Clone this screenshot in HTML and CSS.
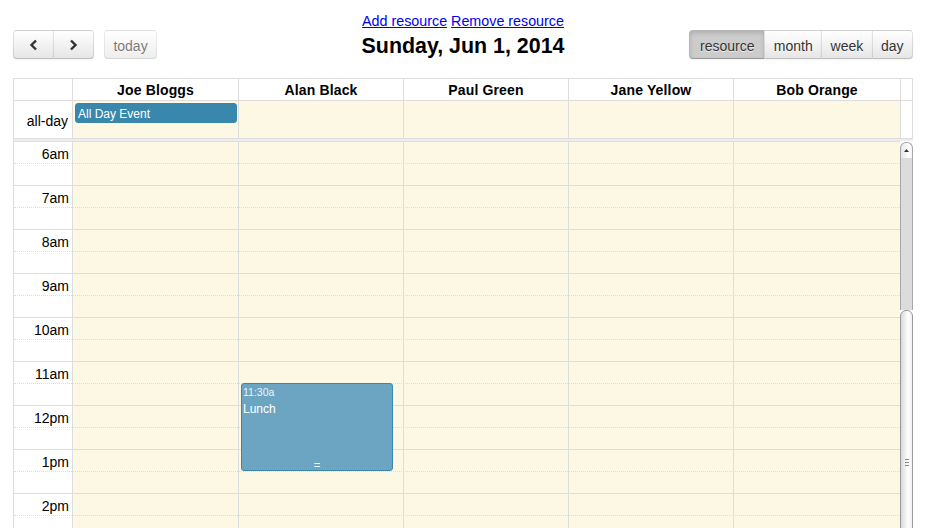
FILE: index.html
```html
<!DOCTYPE html>
<html>
<head>
<meta charset="utf-8">
<title>Resource calendar</title>
<link rel="stylesheet" href="styles.css">
</head>
<body>
<div class="page">
  <div class="links"><a href="#">Add resource</a> <a href="#">Remove resource</a></div>
  <div class="toolbar">
    <div class="tb-left">
      <div class="btn-group">
        <button class="btn btn-icon" type="button"><svg width="9" height="12" viewBox="0 0 9 12"><polyline points="7,1.5 2.5,6 7,10.5" fill="none" stroke="#333" stroke-width="2.4"/></svg></button>
        <button class="btn btn-icon" type="button"><svg width="9" height="12" viewBox="0 0 9 12"><polyline points="2,1.5 6.5,6 2,10.5" fill="none" stroke="#333" stroke-width="2.4"/></svg></button>
      </div>
      <button class="btn disabled" type="button">today</button>
    </div>
    <h2 class="title">Sunday, Jun 1, 2014</h2>
    <div class="tb-right">
      <div class="btn-group">
        <button class="btn active" type="button">resource</button>
        <button class="btn" type="button">month</button>
        <button class="btn" type="button">week</button>
        <button class="btn" type="button">day</button>
      </div>
    </div>
  </div>

  <div class="cal">
    <div class="row-head">
      <div class="cell"></div>
      <div class="cell">Joe Bloggs</div>
      <div class="cell">Alan Black</div>
      <div class="cell">Paul Green</div>
      <div class="cell">Jane Yellow</div>
      <div class="cell">Bob Orange</div>
      <div class="cell"></div>
    </div>
    <div class="row-allday">
      <div class="cell axis-label">all-day</div>
      <div class="cell day"><div class="ad-event">All Day Event</div></div>
      <div class="cell day"></div>
      <div class="cell day"></div>
      <div class="cell day"></div>
      <div class="cell day"></div>
      <div class="cell"></div>
    </div>
    <div class="divider"></div>
    <div class="body">
      <div class="tg">
        <div class="tg-bg">
          <div class="bg-axis"></div>
          <div class="bg-day"></div>
          <div class="bg-day"></div>
          <div class="bg-day"></div>
          <div class="bg-day"></div>
          <div class="bg-day last"></div>
        </div>
        <div class="slats">
          <div class="slat"><div class="slat-label">6am</div></div>
          <div class="slat minor"></div>
          <div class="slat"><div class="slat-label">7am</div></div>
          <div class="slat minor"></div>
          <div class="slat"><div class="slat-label">8am</div></div>
          <div class="slat minor"></div>
          <div class="slat"><div class="slat-label">9am</div></div>
          <div class="slat minor"></div>
          <div class="slat"><div class="slat-label">10am</div></div>
          <div class="slat minor"></div>
          <div class="slat"><div class="slat-label">11am</div></div>
          <div class="slat minor"></div>
          <div class="slat"><div class="slat-label">12pm</div></div>
          <div class="slat minor"></div>
          <div class="slat"><div class="slat-label">1pm</div></div>
          <div class="slat minor"></div>
          <div class="slat"><div class="slat-label">2pm</div></div>
          <div class="slat minor"></div>
          <div class="slat"></div>
        </div>
        <div class="tg-ev">
          <div></div>
          <div class="ev-col"></div>
          <div class="ev-col">
            <div class="tg-event" style="top:242px;height:88px">
              <div class="ev-time">11:30a</div>
              <div class="ev-title">Lunch</div>
              <div class="ev-resizer">=</div>
            </div>
          </div>
          <div class="ev-col"></div>
          <div class="ev-col"></div>
          <div class="ev-col"></div>
        </div>
      </div>
      <div class="sb">
        <div class="sb-btn"><svg width="5" height="3" viewBox="0 0 5 3"><polygon points="0,3 2.5,0 5,3" fill="#333"/></svg></div>
        <div class="sb-track"></div>
        <div class="sb-thumb"><div class="grip"><i></i><i></i><i></i></div></div>
      </div>
    </div>
  </div>
</div>
</body>
</html>
```
FILE: styles.css
```css
* { box-sizing: border-box; }
html, body { margin: 0; padding: 0; background: #fff; }
body {
  font-family: "Liberation Sans", Arial, Helvetica, sans-serif;
  font-size: 14px;
  color: #000;
  overflow: hidden;
}
.page { width: 900px; margin-left: 13px; padding-top: 13px; }

.links { text-align: center; line-height: 16px; height: 16px; font-size: 14.3px; }
.links a { color: #0000ee; text-decoration: underline; }

.toolbar {
  display: grid;
  grid-template-columns: 1fr auto 1fr;
  align-items: start;
  margin-top: 1px;
  height: 29px;
  margin-bottom: 19px;
}
.tb-left { display: flex; gap: 10px; }
.tb-right { display: flex; justify-content: flex-end; }
.title {
  margin: 4px 0 0;
  font-size: 21.4px;
  line-height: 24px;
  font-weight: bold;
}

.btn {
  font-family: inherit;
  font-size: 14px;
  height: 29px;
  margin: 0;
  padding: 2px 8.4px 0;
  border: 1px solid;
  border-color: rgba(0,0,0,.1) rgba(0,0,0,.1) rgba(0,0,0,.25);
  background: #f5f5f5 linear-gradient(to bottom, #fff, #e6e6e6);
  color: #333;
  text-shadow: 0 1px 1px rgba(255,255,255,.75);
  box-shadow: inset 0 1px 0 rgba(255,255,255,.2), 0 1px 2px rgba(0,0,0,.05);
  border-radius: 4px;
  cursor: pointer;
}
.btn-icon { width: 41px; display: flex; align-items: center; justify-content: center; padding: 1px 0 0; }
.btn-group { display: flex; }
.btn-group .btn { border-radius: 0; }
.btn-group .btn + .btn { margin-left: -1px; }
.btn-group .btn:first-child { border-radius: 4px 0 0 4px; }
.btn-group .btn:last-child { border-radius: 0 4px 4px 0; }
.btn.active {
  background: #ccc;
  padding-left: 10px;
  padding-right: 10px;
  box-shadow: inset 0 2px 4px rgba(0,0,0,.15), 0 1px 2px rgba(0,0,0,.05);
}
.btn.disabled { opacity: .65; box-shadow: none; cursor: default; }

.cal { border-top: 1px solid #ddd; border-left: 1px solid #ddd; }
.row-head, .row-allday {
  display: grid;
  grid-template-columns: 59px 166px 165px 165px 165px 167px 12px;
}
.row-head .cell {
  height: 22px;
  border-right: 1px solid #ddd;
  border-bottom: 1px solid #ddd;
  padding-top: 3px;
  line-height: 16px;
  text-align: center;
  font-weight: bold;
  letter-spacing: 0.15px;
}
.row-allday .cell {
  height: 38px;
  border-right: 1px solid #ddd;
  border-bottom: 1px solid #ddd;
}
.row-allday .day { background: #fcf8e3; }
.axis-label { text-align: right; padding: 12px 4px 0 0; line-height: 16px; }
.divider { height: 2px; background: #eee; }

.ad-event {
  margin: 2px 1px 0 2px;
  height: 20px;
  background: #3a87ad;
  border: 1px solid #3a87ad;
  border-radius: 3px;
  color: #fff;
  font-size: 12px;
  line-height: 18px;
  padding: 1px 2px 0;
  white-space: nowrap;
  overflow: hidden;
}

.body { display: flex; height: 387px; }
.tg {
  width: 886px;
  display: grid;
  grid-template-columns: 886px;
  grid-template-rows: 387px;
  overflow: hidden;
}
.tg > * { grid-area: 1 / 1; }
.tg-bg, .tg-ev {
  display: grid;
  grid-template-columns: 59px 166px 165px 165px 165px 166px;
}
.bg-axis { background: #fff; border-right: 1px solid #ddd; }
.bg-day { background: #fcf8e3; border-right: 1px solid #ddd; }
.bg-day.last { border-right: none; }
.ev-col { position: relative; }

.slat { height: 22px; border-top: 1px solid #ddd; }
.slat.minor { border-top-style: dotted; }
.slat-label { width: 59px; text-align: right; padding: 4px 4px 0 0; line-height: 16px; }

.tg-event {
  position: absolute;
  left: 2px;
  width: 152px;
  background: #6ba5c2;
  border: 1px solid #3a87ad;
  border-radius: 3px;
  color: #fff;
  padding: 0 1px;
  overflow: hidden;
}
.ev-time { font-size: 10.5px; line-height: 13px; padding-top: 2px; color: #eef4f8; }
.ev-title { font-size: 12px; line-height: 16px; margin-top: 2px; }
.ev-resizer {
  position: absolute;
  left: 0; right: 0; bottom: 0;
  height: 8px;
  line-height: 8px;
  font-size: 11px;
  font-family: "Liberation Mono", monospace;
  text-align: center;
}

.sb {
  width: 13px;
  height: 387px;
  display: flex;
  flex-direction: column;
  overflow: hidden;
  background: #fff;
}
.sb-btn {
  flex: none;
  height: 16px;
  margin-top: 1px;
  border: 1px solid #a8a8a8;
  border-bottom: none;
  border-radius: 6px 6px 0 0;
  background: linear-gradient(to right, #e6e6e6, #fff 70%, #f2f2f2);
  display: flex;
  align-items: center;
  justify-content: center;
}
.sb-track {
  flex: none;
  height: 152px;
  background: #dcdcdc;
  border-left: 1px solid #a8a8a8;
  border-right: 1px solid #a8a8a8;
}
.sb-thumb {
  flex: none;
  height: 304px;
  border: 1px solid #999;
  border-radius: 6px 6px 0 0;
  background: linear-gradient(to right, #d9d9d9, #fff 65%, #f0f0f0);
  display: flex;
  align-items: center;
  justify-content: center;
}
.grip { display: flex; flex-direction: column; gap: 2px; }
.grip i { display: block; width: 4px; height: 1px; background: #888; }
```
